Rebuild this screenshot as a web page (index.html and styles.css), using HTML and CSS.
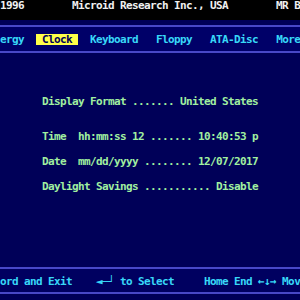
FILE: index.html
```html
<!DOCTYPE html>
<html lang="en">
<head>
  <meta charset="UTF-8" />
  <meta name="viewport" content="width=device-width, initial-scale=1.0"/>
  <title>MR BIOS Setup | Clock</title>
  <link rel="stylesheet" href="styles.css">
</head>
<body>
  <div class="topbar">1996        Microid Research Inc., USA        MR BIOS</div>
  <nav class="tabs">ergy  <span class="active"> Clock </span>  Keyboard   Floppy   ATA-Disc   More</nav>
  <main class="panel">
    <div class="row first">Display Format ....... United States</div>
    <div class="row">Time  hh:mm:ss 12 ....... 10:40:53 p</div>
    <div class="row">Date  mm/dd/yyyy ........ 12/07/2017</div>
    <div class="row">Daylight Savings ........... Disable</div>
  </main>
  <footer class="keys">ord and Exit    ◄─┘ to Select     Home End ←↓→ Move</footer>
</body>
</html>
```

FILE: styles.css
```css
* {
  margin: 0;
  padding: 0;
  box-sizing: border-box;
}

body {
  width: 300px;
  height: 300px;
  overflow: hidden;
  background: #000058;
  font-family: 'DejaVu Sans Mono', monospace;
  font-weight: bold;
  font-size: 11px;
  letter-spacing: -0.62px;
}

.topbar,
.tabs,
.row,
.keys {
  white-space: pre;
  overflow: hidden;
}

.topbar {
  height: 20px;
  background: #000;
  color: #f0f0f0;
  line-height: 12px;
}

.tabs {
  margin-top: 5px;
  height: 28px;
  border-top: 2px solid #4848c8;
  border-bottom: 2px solid #4848c8;
  background: #000068;
  color: #38d8f8;
  line-height: 12px;
  padding-top: 7px;
}

.tabs .active {
  display: inline-block;
  background: #ffff48;
  color: #000058;
  height: 11px;
  line-height: 12px;
}

.panel {
  height: 214px;
  padding: 43px 0 0 42px;
  color: #a0f0a0;
  display: flex;
  flex-direction: column;
  gap: 13px;
}

.row {
  line-height: 12px;
}

.row.first {
  margin-bottom: 10px;
}

.keys {
  height: 27px;
  border-top: 2px solid #4848c8;
  border-bottom: 2px solid #4848c8;
  background: #000060;
  color: #38d8f8;
  line-height: 12px;
  padding-top: 7px;
}
```
